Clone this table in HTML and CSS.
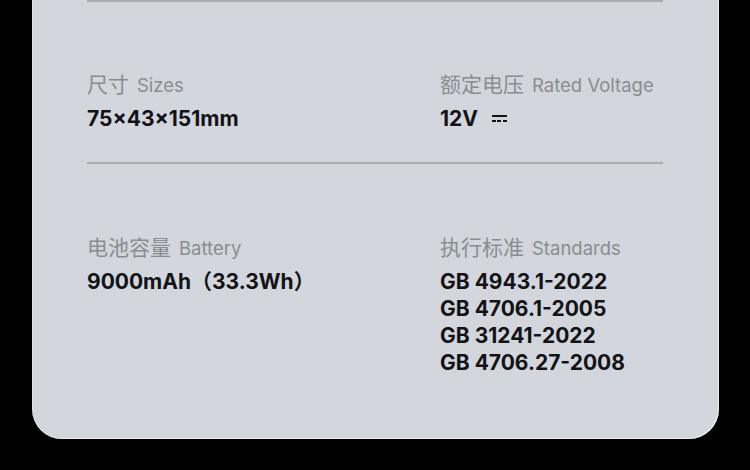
FILE: index.html
```html
<!DOCTYPE html>
<html lang="zh-CN">
<head>
<meta charset="utf-8">
<title>Specs</title>
<link rel="stylesheet" href="styles.css">
</head>
<body>
<div class="card">
  <div class="rule"></div>
  <div class="row row-1">
    <div class="spec">
      <div class="label"><span class="zh">尺寸</span><span class="en">Sizes</span></div>
      <div class="value">75×43×151mm</div>
    </div>
    <div class="spec">
      <div class="label"><span class="zh">额定电压</span><span class="en">Rated Voltage</span></div>
      <div class="value">12V<span class="dc" aria-label="DC"><span class="dc-solid"></span><span class="dc-dash"><i></i><i></i><i></i></span></span></div>
    </div>
  </div>
  <div class="rule"></div>
  <div class="row row-2">
    <div class="spec">
      <div class="label"><span class="zh">电池容量</span><span class="en">Battery</span></div>
      <div class="value">9000mAh（33.3Wh）</div>
    </div>
    <div class="spec">
      <div class="label"><span class="zh">执行标准</span><span class="en">Standards</span></div>
      <div class="value">GB 4943.1-2022</div>
      <div class="value">GB 4706.1-2005</div>
      <div class="value">GB 31241-2022</div>
      <div class="value">GB 4706.27-2008</div>
    </div>
  </div>
</div>
</body>
</html>
```
FILE: styles.css
```css
html, body {
  margin: 0;
  padding: 0;
  background: #000;
}
body {
  font-family: Inter, "Noto Sans CJK SC", sans-serif;
  width: 750px;
  height: 470px;
  overflow: hidden;
}
.card {
  box-sizing: border-box;
  width: 687px;
  height: 439px;
  margin-left: 32px;
  background: #d3d6dc;
  border-radius: 0 0 30px 30px;
  box-shadow: inset -1px -1px 0 rgba(255,255,255,0.55), inset 1px 0 0 rgba(255,255,255,0.35);
  padding: 0 56px 0 55px;
}
.rule {
  height: 2px;
  background: #aaacae;
}
.row {
  display: grid;
  grid-template-columns: 353px 1fr;
}
.row-1 {
  padding: 67px 0 30px;
}
.row-2 {
  padding: 68px 0 0;
}
.label {
  height: 28px;
  line-height: 28px;
  color: #8a8d92;
  margin-bottom: 8px;
  white-space: nowrap;
}
.zh {
  font-family: "Noto Sans CJK SC", sans-serif;
  font-size: 21px;
}
.en {
  font-size: 18.5px;
  margin-left: 8px;
}
.value {
  font-size: 21px;
  font-weight: 700;
  line-height: 27px;
  color: #111317;
  white-space: nowrap;
}
.dc {
  display: inline-block;
  width: 15px;
  margin-left: 14px;
  vertical-align: 4px;
}
.dc-solid {
  display: block;
  height: 2px;
  margin-bottom: 3px;
  background: #111317;
}
.dc-dash {
  display: flex;
  gap: 1.5px;
}
.dc-dash i {
  flex: 1;
  height: 2px;
  background: #111317;
}
```
